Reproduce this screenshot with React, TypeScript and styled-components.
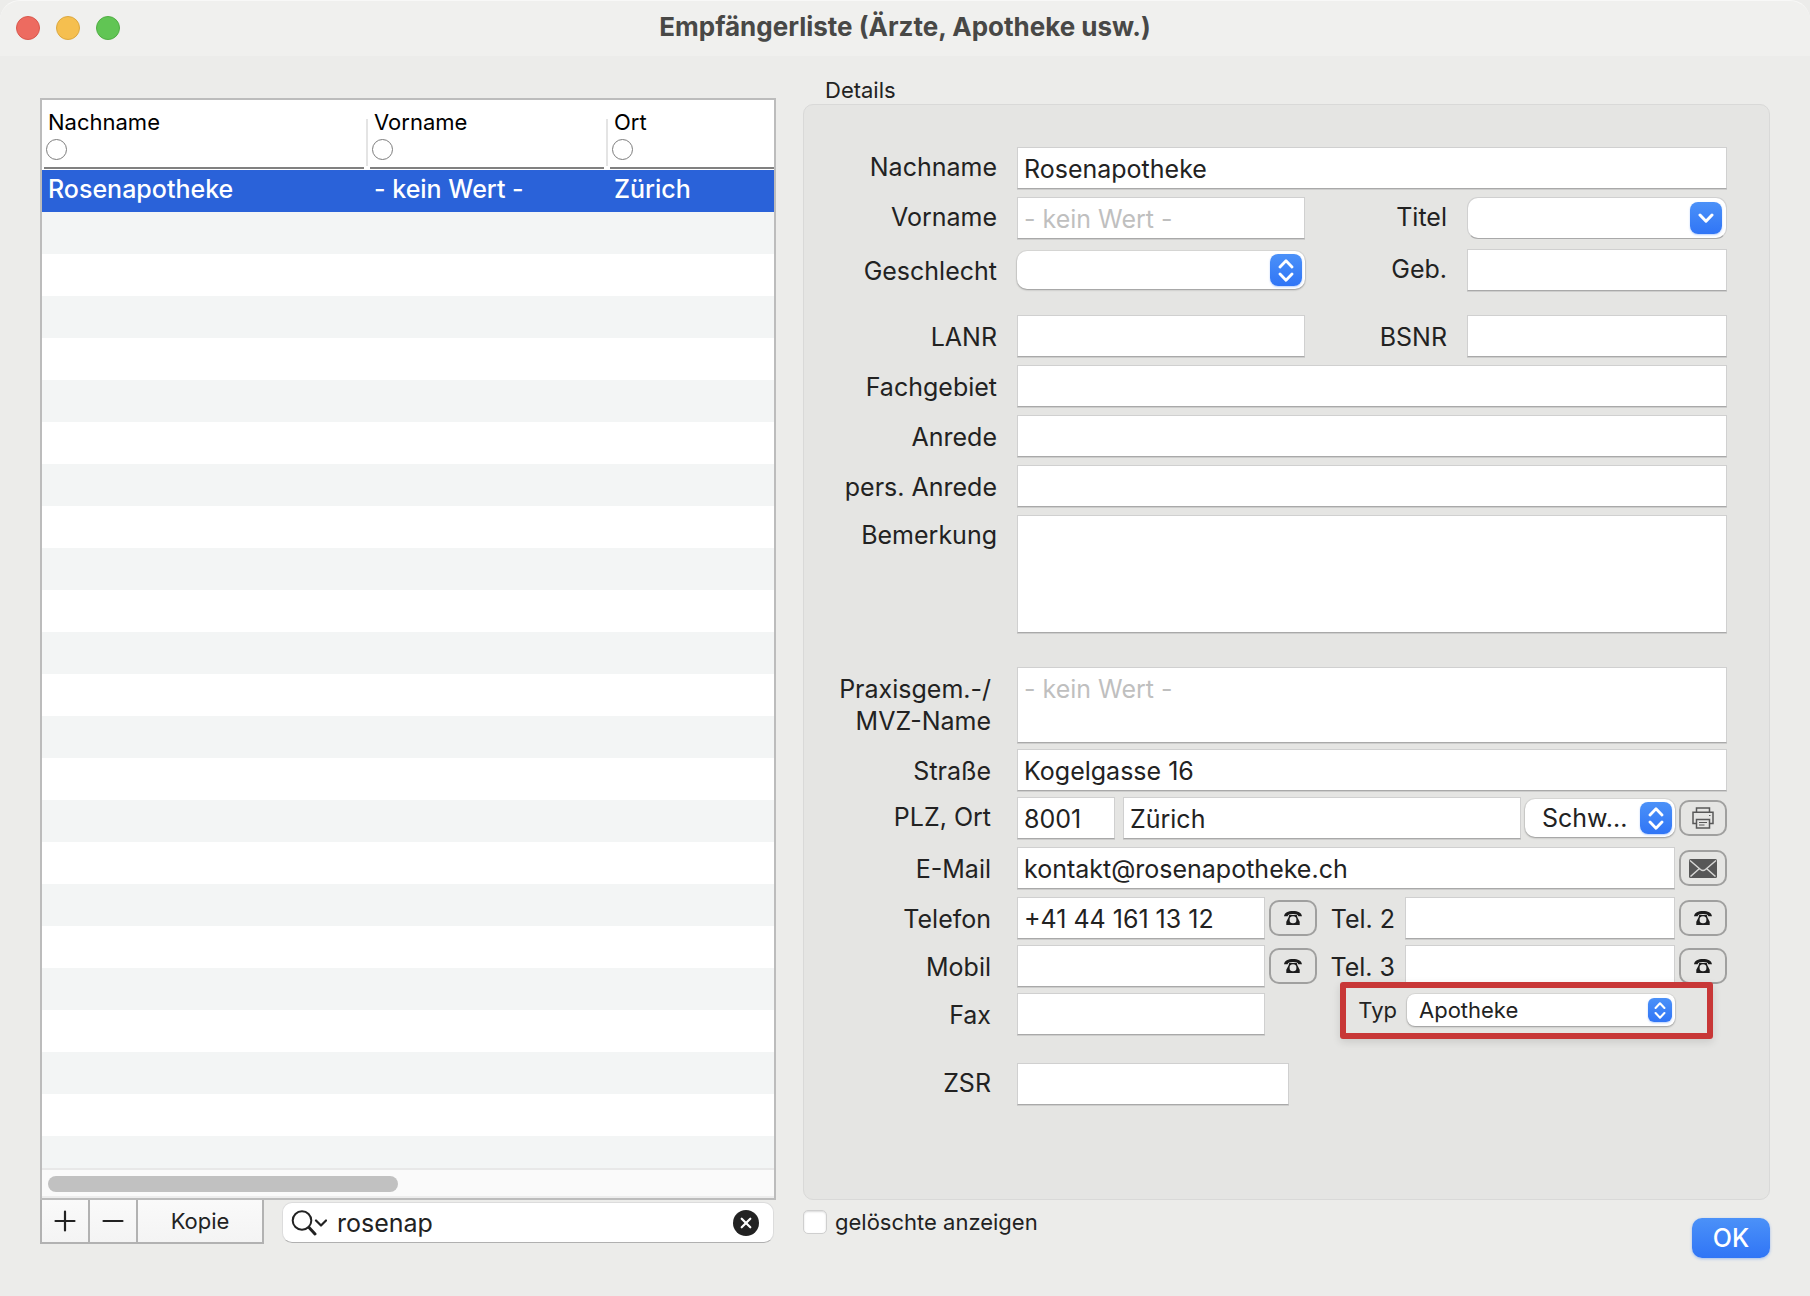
import React from "react";
import styled, { createGlobalStyle, css } from "styled-components";

const GlobalStyle = createGlobalStyle`
  *, *::before, *::after { box-sizing: border-box; }
  body {
    margin: 0;
    background: #ececea;
    color: #222;
    font-family: Inter, "Liberation Sans", sans-serif;
    font-size: 25px;
  }
  button, input, select, textarea { font: inherit; color: inherit; margin: 0; }
`;

/* ---------- window ---------- */

const Window = styled.div`
  display: flex;
  flex-direction: column;
  min-height: 100vh;
  border-radius: 20px 20px 0 0;
  background: #ececea;
`;

const TitleBar = styled.header`
  display: grid;
  grid-template-columns: 1fr auto 1fr;
  align-items: start;
  height: 56px;
  padding: 0 16px;
  border-top: 1px solid #f8f8f7;
  border-radius: 20px 20px 0 0;
  background: #f0f0ee;
`;

const Lights = styled.div`
  display: flex;
  gap: 16px;
  padding-top: 15px;
`;

const Light = styled.button<{ $fill: string; $edge: string }>`
  width: 24px;
  height: 24px;
  padding: 0;
  border: 1px solid ${(p) => p.$edge};
  border-radius: 50%;
  background: ${(p) => p.$fill};
`;

const Title = styled.h1`
  margin: 0;
  font-size: 26px;
  line-height: 52px;
  font-weight: 700;
  color: #484846;
`;

const Main = styled.main`
  display: grid;
  grid-template-columns: minmax(0, 736fr) minmax(0, 967fr);
  column-gap: 27px;
  padding: 20px 40px 0;
`;

/* ---------- recipient list ---------- */

const ListPane = styled.section`
  display: flex;
  flex-direction: column;
  margin-top: 22px;
  border: 2px solid #bcbcbc;
  background: #fff;
`;

const ListTable = styled.table`
  width: 100%;
  table-layout: fixed;
  border-collapse: collapse;
  text-align: left;
`;

const Column = styled.col<{ $width?: number }>`
  width: ${(p) => (p.$width ? `${p.$width}px` : "auto")};
`;

const HeadCell = styled.th`
  height: 70px;
  padding: 0;
  font-size: 22px;
  line-height: 26px;
  font-weight: 400;
  color: #000;
`;

const HeadInner = styled.label<{ $last?: boolean }>`
  display: flex;
  flex-direction: column;
  gap: 4px;
  height: 70px;
  padding: 9px 0 0 4px;
  background:
    linear-gradient(#808080, #808080) 2px 67px / calc(100% - ${(p) => (p.$last ? 2 : 6)}px) 2px no-repeat,
    linear-gradient(#e4e4e4, #e4e4e4) 100% 19px / ${(p) => (p.$last ? 0 : 2)}px 47px no-repeat;

  span { padding-left: 2px; }
`;

const SortRadio = styled.input`
  appearance: none;
  width: 21px;
  height: 21px;
  border: 1px solid #7d7d7d;
  border-radius: 50%;
  background: #fff;
`;

const BodyCell = styled.td`
  height: 42px;
  padding: 0 6px;
  line-height: 38px;
  font-weight: 500;
  color: #fff;
  background: #2a62d9;
  vertical-align: top;
`;

const Stripes = styled.div`
  flex: 1;
  background: repeating-linear-gradient(#f3f5f5 0 42px, #fff 42px 84px);
`;

const ScrollTrack = styled.div`
  height: 30px;
  padding: 6px;
  border-top: 2px solid #e8e8e8;
  border-bottom: 2px solid #ededed;
  background: #fafafa;
`;

const ScrollThumb = styled.div`
  width: 350px;
  height: 16px;
  border-radius: 8px;
  background: #c1c1c1;
`;

const ListFooter = styled.div`
  display: flex;
  gap: 18px;
  height: 44px;
`;

const ListActions = styled.div`
  display: flex;
  border: solid #b2b2b2;
  border-width: 0 2px 2px;
`;

const ListAction = styled.button<{ $wide?: boolean }>`
  display: flex;
  align-items: center;
  justify-content: center;
  width: ${(p) => (p.$wide ? 124 : 48)}px;
  padding: 0;
  border: 0;
  border-right: ${(p) => (p.$wide ? 0 : 2)}px solid #b2b2b2;
  background: linear-gradient(#fafafa, #f4f4f4);
  font-size: 22px;
`;

const SearchBox = styled.label`
  display: flex;
  flex: 1;
  align-items: center;
  height: 41px;
  margin: 2px 2px 0 0;
  padding: 0 14px 0 8px;
  gap: 10px;
  min-width: 0;
  border: 1px solid #dcdcdc;
  border-bottom-color: #b0b0b0;
  border-radius: 10px;
  background: #fff;
`;

const SearchInput = styled.input`
  flex: 1;
  min-width: 0;
  padding: 0;
  border: 0;
  outline: 0;
  background: none;
`;

const ClearButton = styled.button`
  display: flex;
  padding: 0;
  border: 0;
  background: none;
`;

/* ---------- details ---------- */

const DetailsPane = styled.section`
  display: flex;
  flex-direction: column;
`;

const DetailsTitle = styled.h2`
  margin: 0;
  padding-left: 22px;
  font-size: 22px;
  line-height: 28px;
  font-weight: 400;
`;

const DetailsBox = styled.form`
  flex: 1;
  padding: 42px 42px 94px 0;
  border: 1px solid #d9d9d8;
  border-radius: 10px;
  background: #e5e5e3;
`;

const Section = styled.div<{ $gap: number; $before?: number }>`
  display: flex;
  flex-direction: column;
  gap: ${(p) => p.$gap}px;
  margin-top: ${(p) => p.$before ?? 0}px;
`;

const Row = styled.div<{ $inset?: boolean }>`
  display: grid;
  grid-template-columns: ${(p) => (p.$inset ? "187px" : "193px")} minmax(0, 1fr);
  column-gap: ${(p) => (p.$inset ? 26 : 20)}px;
`;

const Label = styled.label<{ $high?: boolean }>`
  height: 42px;
  line-height: ${(p) => (p.$high ? 40 : 44)}px;
  text-align: right;
  white-space: nowrap;
`;

const StackedLabel = styled(Label)`
  height: 76px;
  padding-top: 6px;
  line-height: 32px;
`;

const MiddleLabel = styled(Label)`
  padding-right: 20px;
`;

const PhoneLabel = styled(Label)`
  width: 80px;
  padding-right: 6px;
`;

const Halves = styled.div`
  display: grid;
  grid-template-columns: minmax(0, 288fr) minmax(0, 162fr) minmax(0, 260fr);
`;

const Line = styled.div`
  display: flex;
  gap: 4px;
`;

const Town = styled.div`
  display: flex;
  flex: 1;
  gap: 8px;
  min-width: 0;
`;

const fieldLook = css`
  border: 1px solid #d0d0d0;
  border-bottom-color: #a9a9a9;
  border-radius: 0;
  outline: 0;
  background: #fff;
  box-shadow: 0 1px 0 #cdcdcc;

  &::placeholder { color: #bfbfbf; opacity: 1; }
`;

const Field = styled.input<{ $width?: number }>`
  ${fieldLook}
  flex: ${(p) => (p.$width ? "none" : "1")};
  width: ${(p) => (p.$width ? `${p.$width}px` : "100%")};
  min-width: 0;
  height: 42px;
  padding: 2px 6px 0;
`;

const Area = styled.textarea<{ $height: number }>`
  ${fieldLook}
  display: block;
  width: 100%;
  height: ${(p) => p.$height}px;
  padding: 5px 6px;
  line-height: 32px;
  resize: none;
`;

const PopupFrame = styled.div<{ $width?: number; $small?: boolean }>`
  position: relative;
  flex: ${(p) => (p.$width ? "none" : "1")};
  width: ${(p) => (p.$width ? `${p.$width}px` : "auto")};
  height: ${(p) => (p.$small ? 32 : 38)}px;
  margin-top: ${(p) => (p.$small ? 1 : 2)}px;
  border-radius: ${(p) => (p.$small ? 8 : 10)}px;
  background: #fff;
  box-shadow: 0 0 0 1px rgba(0, 0, 0, 0.05), 0 1px 2px rgba(0, 0, 0, 0.3);
`;

const PopupSelect = styled.select<{ $small?: boolean }>`
  appearance: none;
  display: block;
  width: 100%;
  height: 100%;
  padding: 0 ${(p) => (p.$small ? 12 : 17)}px;
  border: 0;
  outline: 0;
  background: none;
  font-size: ${(p) => (p.$small ? 22 : 25)}px;
`;

const blueBadge = css`
  display: flex;
  align-items: center;
  justify-content: center;
  background: linear-gradient(#4b91f8, #3075f6);
  box-shadow: 0 1px 2px rgba(48, 117, 246, 0.35);
`;

const Stepper = styled.span<{ $small?: boolean }>`
  ${blueBadge}
  position: absolute;
  top: ${(p) => (p.$small ? 4 : 3)}px;
  right: 3px;
  width: ${(p) => (p.$small ? 24 : 32)}px;
  height: ${(p) => (p.$small ? 24 : 32)}px;
  border-radius: ${(p) => (p.$small ? 6 : 8)}px;
  pointer-events: none;
`;

const Combo = styled.div`
  display: flex;
  align-items: center;
  height: 42px;
  padding: 0 4px 0 8px;
  border: 1px solid #d0d0d0;
  border-bottom-color: #a9a9a9;
  border-radius: 11px;
  background: #fff;
`;

const ComboButton = styled.button`
  ${blueBadge}
  width: 32px;
  height: 32px;
  padding: 0;
  border: 0;
  border-radius: 8px;
`;

const IconButton = styled.button`
  display: flex;
  flex: none;
  align-items: center;
  justify-content: center;
  width: 48px;
  height: 36px;
  margin-top: 3px;
  padding: 0;
  border: 2px solid #a0a09f;
  border-radius: 10px;
  background: none;
`;

const TypeGroup = styled.div`
  position: relative;
  display: flex;
  flex: 1;
  gap: 6px;
  height: 34px;
  margin: 0 52px;
`;

const TypeLabel = styled(PhoneLabel)`
  height: 34px;
  padding-right: 4px;
  font-size: 22px;
  line-height: 34px;
`;

const Highlight = styled.span`
  position: absolute;
  inset: -11px -38px -12px 19px;
  border: 6px solid #c83737;
  border-radius: 3px;
  box-shadow: 0 3px 8px rgba(0, 0, 0, 0.12);
  pointer-events: none;
`;

const DetailsFooter = styled.footer`
  display: flex;
  align-items: flex-start;
  justify-content: space-between;
`;

const CheckLabel = styled.label`
  display: flex;
  align-items: center;
  gap: 8px;
  height: 44px;
  font-size: 22px;
`;

const Check = styled.input`
  appearance: none;
  width: 24px;
  height: 24px;
  border: 1px solid #cfcfcf;
  border-radius: 5px;
  background: #fff;
  box-shadow: inset 0 1px 2px rgba(0, 0, 0, 0.15);
`;

const OkButton = styled.button`
  width: 78px;
  height: 40px;
  margin-top: 18px;
  padding: 0;
  border: 0;
  border-radius: 10px;
  background: linear-gradient(#4b91f8, #3075f6);
  box-shadow: 0 1px 3px rgba(48, 117, 246, 0.4);
  color: #fff;
  font-weight: 500;
  line-height: 38px;
`;

/* ---------- icons ---------- */

const PlusIcon = () => (
  <svg width="22" height="22" viewBox="0 0 22 22" fill="none" stroke="#222" strokeWidth="2.2" strokeLinecap="round">
    <path d="M1.5 11h19M11 1.5v19" />
  </svg>
);

const MinusIcon = () => (
  <svg width="22" height="22" viewBox="0 0 22 22" fill="none" stroke="#222" strokeWidth="2.2" strokeLinecap="round">
    <path d="M1.5 11h19" />
  </svg>
);

const SearchIcon = () => (
  <svg width="36" height="26" viewBox="0 0 36 26" fill="none" stroke="#222" strokeLinecap="round" strokeLinejoin="round">
    <circle cx="11" cy="10.5" r="9.3" strokeWidth="2" />
    <path d="M18 17.5l6 6.5" strokeWidth="3" />
    <path d="M25 10.5l5 5 5-5" strokeWidth="2.2" />
  </svg>
);

const ClearIcon = () => (
  <svg width="26" height="26" viewBox="0 0 26 26">
    <circle cx="13" cy="13" r="13" fill="#222" />
    <path d="M8.7 8.7l8.6 8.6M17.3 8.7l-8.6 8.6" stroke="#fff" strokeWidth="2.2" strokeLinecap="round" />
  </svg>
);

const StepperIcon = ({ small }: { small?: boolean }) => (
  <svg width={small ? 12 : 16} height={small ? 17 : 23} viewBox="0 0 16 23" fill="none" stroke="#fff" strokeWidth="2.8" strokeLinecap="round" strokeLinejoin="round">
    <path d="M2 8l6-6.2L14 8M2 15l6 6.2L14 15" />
  </svg>
);

const ChevronIcon = () => (
  <svg width="16" height="11" viewBox="0 0 16 11" fill="none" stroke="#fff" strokeWidth="3" strokeLinecap="round" strokeLinejoin="round">
    <path d="M2 2l6 6.2L14 2" />
  </svg>
);

const PrinterIcon = () => (
  <svg width="22" height="22" viewBox="0 0 22 22" fill="none" stroke="#585858" strokeWidth="1.5">
    <path d="M4.5 5V1h13v4" />
    <path d="M4 16.5H1V5.2h20v11.3h-3" />
    <path d="M4.5 12.5h13V21h-13z" />
    <path d="M7 15.5h8M7 18h5.5M17 8.5h1.5" strokeWidth="1.2" />
  </svg>
);

const MailIcon = () => (
  <svg width="28" height="19" viewBox="0 0 28 19">
    <rect width="28" height="19" rx="1.5" fill="#575757" />
    <path d="M1 1.5l10.500 9q2.500 2 5 0L27 1.500M1.500 17.500l9-8M26.500 17.500l-9-8" fill="none" stroke="#d8d8d6" strokeWidth="1.5" />
  </svg>
);

const PhoneIcon = () => (
  <svg width="18" height="14" viewBox="0 0 18 14" fill="#1c1c1c">
    <path d="M0 5.200C.6 1.600 4 0 9 0s8.400 1.600 9 5.200h-3.600C14 3.600 12.400 2.900 9 2.900S4 3.600 3.600 5.200z" />
    <path fillRule="evenodd" d="M5.200 3.900h7.600l.7 2.600 2.200 4.200V14H2.300v-3.300l2.200-4.200zM9 5.300a3.400 3.400 0 0 0-3.400 3.600A3.300 3.300 0 0 0 9 12.200a3.300 3.300 0 0 0 3.400-3.300A3.400 3.400 0 0 0 9 5.300z" />
  </svg>
);

/* ---------- composed controls ---------- */

type PopupProps = { id: string; value?: string; width?: number; small?: boolean };

const Popup = ({ id, value = "", width, small }: PopupProps) => (
  <PopupFrame $width={width} $small={small}>
    <PopupSelect id={id} $small={small} defaultValue={value} aria-label={id === "land" ? "Land" : undefined}>
      <option value={value}>{value}</option>
    </PopupSelect>
    <Stepper $small={small}>
      <StepperIcon small={small} />
    </Stepper>
  </PopupFrame>
);

const DialButton = ({ name }: { name: string }) => (
  <IconButton type="button" aria-label={`${name} anrufen`}>
    <PhoneIcon />
  </IconButton>
);

type TextRowProps = { id: string; label: string; value?: string; high?: boolean; inset?: boolean; width?: number };

const TextRow = ({ id, label, value, high, inset, width }: TextRowProps) => (
  <Row $inset={inset}>
    <Label htmlFor={id} $high={high}>{label}</Label>
    <Field id={id} defaultValue={value} $width={width} />
  </Row>
);

type PhoneRowProps = { id: string; label: string; value?: string; secondId: string; secondLabel: string };

const PhoneRow = ({ id, label, value, secondId, secondLabel }: PhoneRowProps) => (
  <Row $inset>
    <Label htmlFor={id}>{label}</Label>
    <Line>
      <Field id={id} defaultValue={value} $width={248} />
      <DialButton name={label} />
      <PhoneLabel htmlFor={secondId}>{secondLabel}</PhoneLabel>
      <Field id={secondId} />
      <DialButton name={secondLabel} />
    </Line>
  </Row>
);

const columns = [
  { title: "Nachname", width: 326, value: "Rosenapotheke" },
  { title: "Vorname", width: 240, value: "- kein Wert -" },
  { title: "Ort", width: undefined, value: "Zürich" },
];

export default function App() {
  return (
    <Window>
      <GlobalStyle />
      <TitleBar>
        <Lights>
          <Light type="button" aria-label="Schließen" $fill="#ed6b60" $edge="#d9584d" />
          <Light type="button" aria-label="Minimieren" $fill="#f5bf4f" $edge="#dca83f" />
          <Light type="button" aria-label="Vergrößern" $fill="#61c554" $edge="#50ae43" />
        </Lights>
        <Title>Empfängerliste (Ärzte, Apotheke usw.)</Title>
      </TitleBar>

      <Main>
        <ListPane>
          <ListTable>
            <colgroup>
              {columns.map((c) => <Column key={c.title} $width={c.width} />)}
            </colgroup>
            <thead>
              <tr>
                {columns.map((c) => (
                  <HeadCell key={c.title} scope="col">
                    <HeadInner $last={!c.width}>
                      <span>{c.title}</span>
                      <SortRadio type="radio" name="sortierung" />
                    </HeadInner>
                  </HeadCell>
                ))}
              </tr>
            </thead>
            <tbody>
              <tr>
                {columns.map((c) => <BodyCell key={c.title}>{c.value}</BodyCell>)}
              </tr>
            </tbody>
          </ListTable>
          <Stripes />
          <ScrollTrack>
            <ScrollThumb />
          </ScrollTrack>
        </ListPane>

        <DetailsPane>
          <DetailsTitle>Details</DetailsTitle>
          <DetailsBox>
            <Section $gap={8}>
              <TextRow id="nachname" label="Nachname" value="Rosenapotheke" high />
              <Row>
                <Label htmlFor="vorname" $high>Vorname</Label>
                <Halves>
                  <Field id="vorname" placeholder="- kein Wert -" />
                  <MiddleLabel htmlFor="titel" $high>Titel</MiddleLabel>
                  <Combo>
                    <SearchInput id="titel" />
                    <ComboButton type="button" aria-label="Titel auswählen">
                      <ChevronIcon />
                    </ComboButton>
                  </Combo>
                </Halves>
              </Row>
            </Section>

            <Section $gap={8} $before={10}>
              <Row>
                <Label htmlFor="geschlecht">Geschlecht</Label>
                <Halves>
                  <Popup id="geschlecht" />
                  <MiddleLabel htmlFor="geb" $high>Geb.</MiddleLabel>
                  <Field id="geb" />
                </Halves>
              </Row>
            </Section>

            <Section $gap={8} $before={24}>
              <Row>
                <Label htmlFor="lanr">LANR</Label>
                <Halves>
                  <Field id="lanr" />
                  <MiddleLabel htmlFor="bsnr">BSNR</MiddleLabel>
                  <Field id="bsnr" />
                </Halves>
              </Row>
              <TextRow id="fachgebiet" label="Fachgebiet" />
              <TextRow id="anrede" label="Anrede" />
              <TextRow id="pers-anrede" label="pers. Anrede" />
              <Row>
                <Label htmlFor="bemerkung" $high>Bemerkung</Label>
                <Area id="bemerkung" $height={118} />
              </Row>
            </Section>

            <Section $gap={6} $before={34}>
              <Row $inset>
                <StackedLabel htmlFor="praxis">Praxisgem.-/<br />MVZ-Name</StackedLabel>
                <Area id="praxis" $height={76} placeholder="- kein Wert -" />
              </Row>
              <TextRow id="strasse" label="Straße" value="Kogelgasse 16" inset />
              <Row $inset>
                <Label htmlFor="plz" $high>PLZ, Ort</Label>
                <Line>
                  <Town>
                    <Field id="plz" defaultValue="8001" $width={98} />
                    <Field aria-label="Ort" defaultValue="Zürich" />
                  </Town>
                  <Popup id="land" value="Schw..." width={150} />
                  <IconButton type="button" aria-label="Adresse drucken">
                    <PrinterIcon />
                  </IconButton>
                </Line>
              </Row>
            </Section>

            <Section $gap={8} $before={8}>
              <Row $inset>
                <Label htmlFor="email">E-Mail</Label>
                <Line>
                  <Field id="email" type="email" defaultValue="kontakt@rosenapotheke.ch" />
                  <IconButton type="button" aria-label="E-Mail schreiben">
                    <MailIcon />
                  </IconButton>
                </Line>
              </Row>
            </Section>

            <Section $gap={6} $before={8}>
              <PhoneRow id="telefon" label="Telefon" value="+41 44 161 13 12" secondId="tel2" secondLabel="Tel. 2" />
              <PhoneRow id="mobil" label="Mobil" secondId="tel3" secondLabel="Tel. 3" />
              <Row $inset>
                <Label htmlFor="fax">Fax</Label>
                <Line>
                  <Field id="fax" $width={248} />
                  <TypeGroup>
                    <TypeLabel htmlFor="typ">Typ</TypeLabel>
                    <Popup id="typ" value="Apotheke" small />
                    <Highlight />
                  </TypeGroup>
                </Line>
              </Row>
            </Section>

            <Section $gap={8} $before={28}>
              <TextRow id="zsr" label="ZSR" high inset width={272} />
            </Section>
          </DetailsBox>
        </DetailsPane>

        <ListFooter>
          <ListActions>
            <ListAction type="button" aria-label="Hinzufügen"><PlusIcon /></ListAction>
            <ListAction type="button" aria-label="Entfernen"><MinusIcon /></ListAction>
            <ListAction type="button" $wide>Kopie</ListAction>
          </ListActions>
          <SearchBox>
            <SearchIcon />
            <SearchInput aria-label="Suchen" defaultValue="rosenap" />
            <ClearButton type="button" aria-label="Suche löschen">
              <ClearIcon />
            </ClearButton>
          </SearchBox>
        </ListFooter>

        <DetailsFooter>
          <CheckLabel>
            <Check type="checkbox" />
            gelöschte anzeigen
          </CheckLabel>
          <OkButton type="button">OK</OkButton>
        </DetailsFooter>
      </Main>
    </Window>
  );
}
